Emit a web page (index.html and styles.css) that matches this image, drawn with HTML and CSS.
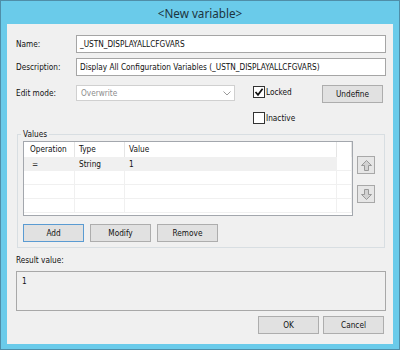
FILE: index.html
```html
<!DOCTYPE html>
<html>
<head>
<meta charset="utf-8">
<link rel="stylesheet" href="styles.css">
</head>
<body>
<div class="window">
  <div class="titlebar">&lt;New variable&gt;</div>
  <div class="client">
    <div class="field-row">
      <label class="lbl">Name:</label>
      <div class="textbox">_USTN_DISPLAYALLCFGVARS</div>
    </div>
    <div class="field-row row-desc">
      <label class="lbl">Description:</label>
      <div class="textbox">Display All Configuration Variables (_USTN_DISPLAYALLCFGVARS)</div>
    </div>
    <div class="mode-row">
      <label class="lbl">Edit mode:</label>
      <div class="select">
        <span>Overwrite</span>
        <svg class="chev" width="8" height="5" viewBox="0 0 8 5"><polyline points="0.5,0.5 4,4 7.5,0.5" fill="none" stroke="#9a9a9a" stroke-width="1"/></svg>
      </div>
      <div class="checks">
        <div class="check">
          <span class="box"><svg width="10" height="10" viewBox="0 0 10 10"><path d="M1.5 5 L4 7.8 L8.6 1.8" fill="none" stroke="#111" stroke-width="1.7"/></svg></span>
          <span>Locked</span>
        </div>
        <div class="check">
          <span class="box"></span>
          <span>Inactive</span>
        </div>
      </div>
      <button class="btn">Undefine</button>
    </div>
    <fieldset class="group">
      <legend>Values</legend>
      <div class="list-area">
        <div class="list">
          <div class="lrow lhead">
            <div class="cell c1">Operation</div>
            <div class="cell c2">Type</div>
            <div class="cell c3">Value</div>
            <div class="cell c4"></div>
          </div>
          <div class="lrow sel">
            <div class="cell c1 op">=</div>
            <div class="cell c2">String</div>
            <div class="cell c3">1</div>
            <div class="cell c4"></div>
          </div>
          <div class="lrow">
            <div class="cell c1"></div><div class="cell c2"></div><div class="cell c3"></div><div class="cell c4"></div>
          </div>
          <div class="lrow">
            <div class="cell c1"></div><div class="cell c2"></div><div class="cell c3"></div><div class="cell c4"></div>
          </div>
          <div class="lrow">
            <div class="cell c1"></div><div class="cell c2"></div><div class="cell c3"></div><div class="cell c4"></div>
          </div>
        </div>
        <div class="arrows">
          <button class="abtn"><svg width="11" height="11" viewBox="0 0 11 11"><polygon points="5.5,0.5 10.5,5.5 7.5,5.5 7.5,10.5 3.5,10.5 3.5,5.5 0.5,5.5" fill="#d2d2d2" stroke="#999" stroke-width="1"/></svg></button>
          <button class="abtn"><svg width="11" height="11" viewBox="0 0 11 11"><polygon points="5.5,10.5 10.5,5.5 7.5,5.5 7.5,0.5 3.5,0.5 3.5,5.5 0.5,5.5" fill="#d2d2d2" stroke="#999" stroke-width="1"/></svg></button>
        </div>
      </div>
      <div class="btn-row">
        <button class="btn default">Add</button>
        <button class="btn">Modify</button>
        <button class="btn">Remove</button>
      </div>
    </fieldset>
    <div class="result-label">Result value:</div>
    <div class="result-box">1</div>
    <div class="footer">
      <button class="btn">OK</button>
      <button class="btn">Cancel</button>
    </div>
  </div>
</div>
</body>
</html>
```
FILE: styles.css
```css
* { box-sizing: border-box; }
html, body { margin: 0; padding: 0; }
body {
  width: 400px;
  height: 350px;
  overflow: hidden;
  font-family: "DejaVu Sans Condensed", "DejaVu Sans", sans-serif;
  font-size: 8.2px;
  color: #111;
}
.window {
  width: 400px;
  height: 350px;
  background: #6acbea;
  border: 1px solid #4f8ea8;
  padding: 0 6px 5px 6px;
  display: flex;
  flex-direction: column;
}
.titlebar {
  height: 23px;
  line-height: 23px;
  padding-top: 1px;
  text-align: center;
  font-family: "Noto Sans", "Open Sans", sans-serif;
  font-size: 11.7px;
  color: #1d3440;
}
.client {
  flex: 1;
  background: #f0f0f0;
  padding: 11px 7px 0 9px;
  display: flex;
  flex-direction: column;
}
.field-row {
  display: flex;
  align-items: center;
  height: 18px;
}
.row-desc { margin-top: 5px; }
.lbl { width: 60px; flex: none; }
.textbox {
  flex: 1;
  height: 18px;
  border: 1px solid #a5a5a5;
  background: #fff;
  padding: 0 3px;
  line-height: 16px;
  white-space: nowrap;
  overflow: hidden;
}
.mode-row {
  display: flex;
  margin-top: 9px;
  height: 40px;
}
.mode-row .lbl { line-height: 16px; }
.select {
  width: 159px;
  height: 16px;
  border: 1px solid #d0d0d0;
  background: #fff;
  color: #8c8c8c;
  padding: 0 3px 0 4px;
  display: flex;
  align-items: center;
  justify-content: space-between;
}
.chev { display: block; }
.checks {
  margin-left: 18px;
  width: 69px;
  display: flex;
  flex-direction: column;
  gap: 14px;
  padding-top: 1px;
}
.check {
  display: flex;
  align-items: center;
  height: 12px;
  gap: 1px;
}
.box {
  width: 12px;
  height: 12px;
  border: 1px solid #333;
  background: #fff;
  display: flex;
  align-items: center;
  justify-content: center;
}
.box svg { display: block; }
.btn {
  width: 61px;
  height: 18px;
  background: #e1e1e1;
  border: 1px solid #adadad;
  font: inherit;
  color: #111;
  padding: 0;
  margin: 0;
}
.btn.default { border-color: #5a9bd2; }
.group {
  margin: 4px 1px 0 1px;
  border: 1px solid #d8dee2;
  padding: 1px 5px 5px 5px;
  min-width: 0;
}
.group legend {
  padding: 0 2px;
  margin-left: -2px;
  line-height: 11px;
}
.list-area {
  display: flex;
  gap: 4px;
}
.list {
  width: 330px;
  height: 75px;
  border: 1px solid #a3a7ad;
  background: #fff;
}
.lrow {
  display: grid;
  grid-template-columns: 51px 50px 212px 1fr;
  height: 14px;
  border-bottom: 1px solid #f0f0f0;
}
.lhead { height: 15px; border-bottom: none; }
.cell {
  border-right: 1px solid #f0f0f0;
  padding-left: 4px;
  line-height: 14px;
  white-space: nowrap;
}
.lhead .cell { border-right-color: #e5e5e5; line-height: 15px; }
.c1 { padding-left: 6px; }
.op { padding-left: 8px; }
.sel .c1, .sel .c2, .sel .c3 { background: #f0f0f0; }
.arrows {
  display: flex;
  flex-direction: column;
  gap: 11px;
  padding-top: 15px;
}
.abtn {
  width: 18px;
  height: 18px;
  background: #e6e6e6;
  border: 1px solid #a8a8a8;
  padding: 0;
  margin: 0;
  display: flex;
  align-items: center;
  justify-content: center;
}
.abtn svg { display: block; }
.btn-row {
  display: flex;
  gap: 6px;
  margin-top: 8px;
}
.result-label {
  margin-top: 6px;
  line-height: 12px;
}
.result-box {
  margin-top: 5px;
  height: 40px;
  border: 1px solid #a8a8a8;
  background: #f0f0f0;
  padding: 3px 5px;
  line-height: 12px;
}
.footer {
  display: flex;
  justify-content: flex-end;
  gap: 4px;
  margin-top: 5px;
  margin-right: 2px;
}
```
